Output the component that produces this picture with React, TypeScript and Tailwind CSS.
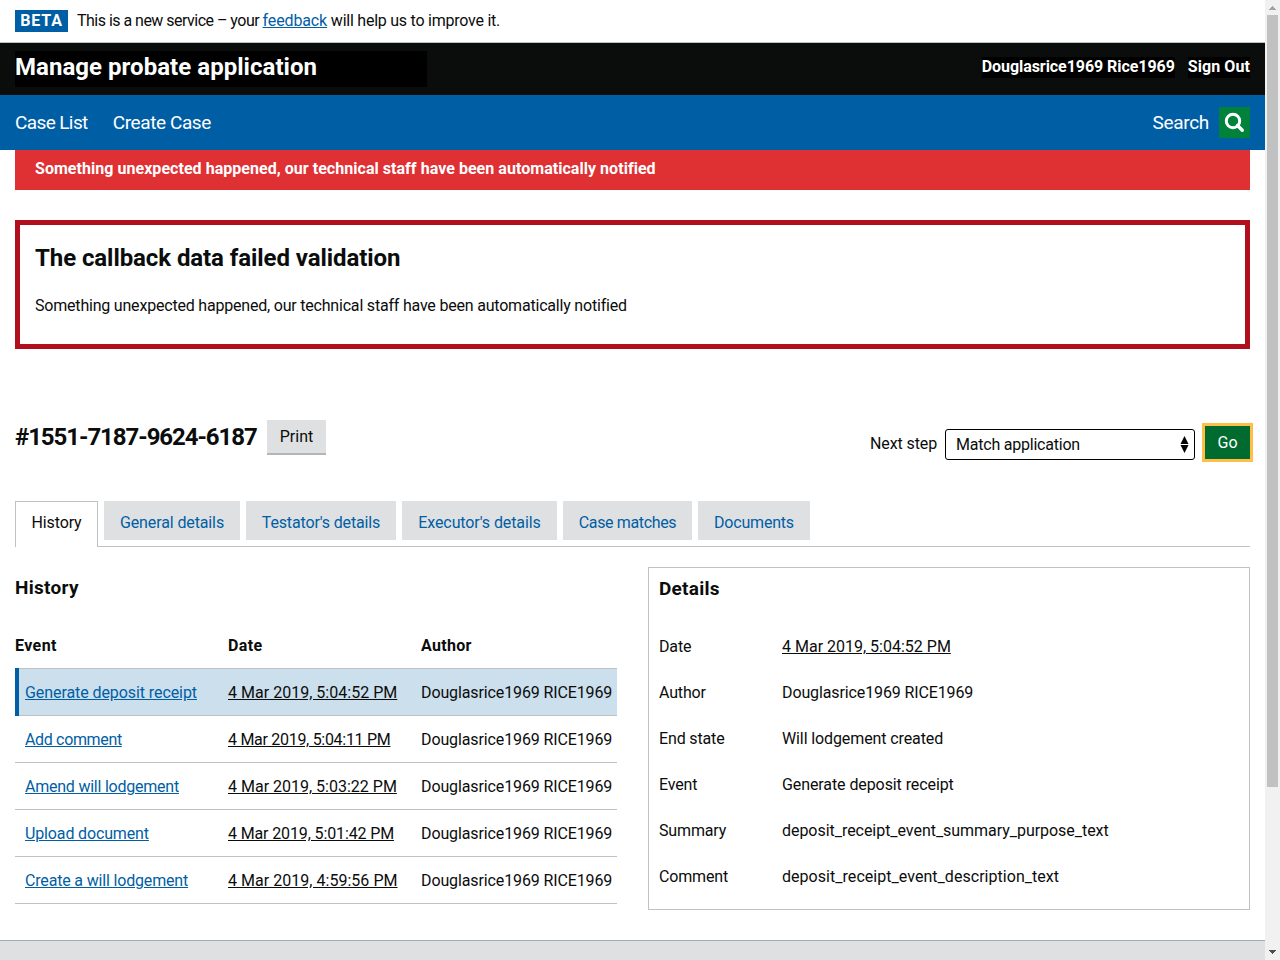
import React from "react";

const tabs = [
  { label: "General details", style: "w-[136px] tracking-[-0.12px]" },
  { label: "Testator's details", style: "w-[150px] tracking-[-0.15px]" },
  { label: "Executor's details", style: "w-[155px] tracking-[-0.1px]" },
  { label: "Case matches", style: "w-[129px] tracking-[-0.36px]" },
  { label: "Documents", style: "w-[112px] tracking-[-0.2px]" },
];

const events = [
  { name: "Generate deposit receipt", date: "4 Mar 2019, 5:04:52 PM", nameStyle: "tracking-[-0.08px]", dateStyle: "tracking-[0.02px]" },
  { name: "Add comment", date: "4 Mar 2019, 5:04:11 PM", nameStyle: "tracking-[-0.34px]", dateStyle: "tracking-[-0.29px]" },
  { name: "Amend will lodgement", date: "4 Mar 2019, 5:03:22 PM", nameStyle: "tracking-[-0.23px]", dateStyle: "tracking-[0px]" },
  { name: "Upload document", date: "4 Mar 2019, 5:01:42 PM", nameStyle: "tracking-[-0.14px]", dateStyle: "tracking-[-0.13px]" },
  { name: "Create a will lodgement", date: "4 Mar 2019, 4:59:56 PM", nameStyle: "tracking-[-0.17px]", dateStyle: "tracking-[0.03px]" },
];

const details = [
  { label: "Date", value: "4 Mar 2019, 5:04:52 PM", style: "underline" },
  { label: "Author", value: "Douglasrice1969 RICE1969", style: "tracking-[-0.12px]" },
  { label: "End state", value: "Will lodgement created", style: "tracking-[-0.11px]" },
  { label: "Event", value: "Generate deposit receipt", style: "tracking-[-0.09px]" },
  { label: "Summary", value: "deposit_receipt_event_summary_purpose_text", style: "tracking-[-0.04px]" },
  { label: "Comment", value: "deposit_receipt_event_description_text", style: "tracking-[0.04px]" },
];

function PhaseBanner() {
  return (
    <div className="flex h-[43px] shrink-0 items-start border-b border-[#bfc1c3] px-[15px] pt-[10px]">
      <strong className="h-[22px] w-[53px] bg-[#005ea5] text-center text-[16px] leading-[22px] font-bold tracking-[0.8px] text-white">BETA</strong>
      <span className="ml-[9px] leading-[22px] tracking-[-0.24px]">
        <span className="tracking-[-0.52px]">This is a new service – your </span>
        <a className="tracking-[-0.12px] text-[#005ea5] underline">feedback</a> will help us to improve it.
      </span>
    </div>
  );
}

function Header() {
  return (
    <header className="flex h-[52px] shrink-0 items-start justify-between bg-[#0b0c0c] px-[15px] pt-2 font-bold text-white">
      <div className="h-9 w-[412px] bg-black text-[24px] leading-[32px] tracking-[0.04px]">
        <span>Manage probate application</span>
      </div>
      <div className="flex gap-[13px] pt-[6px]">
        <span className="h-[21px] bg-black leading-[20px] tracking-[-0.06px]">Douglasrice1969 Rice1969</span>
        <span className="h-[21px] bg-black leading-[20px] tracking-[0.08px]">Sign Out</span>
      </div>
    </header>
  );
}

function Nav() {
  return (
    <nav className="flex h-[55px] shrink-0 items-center justify-between bg-[#005ea5] px-[15px] text-[19px] text-white">
      <div className="flex gap-[25px] pt-px">
        <a className="tracking-[-0.61px]">Case List</a>
        <a className="tracking-[-0.4px]">Create Case</a>
      </div>
      <div className="flex items-center gap-[10px]">
        <a className="pt-[2px] tracking-[-0.3px]">Search</a>
        <span className="flex size-[31px] items-center justify-center bg-[#00823b]">
          <svg width="31" height="31" viewBox="0 0 31 31" fill="none" stroke="#fff">
            <circle cx="14" cy="14" r="6.7" strokeWidth="3" />
            <path d="M18.5 18.5L23.3 23.3" strokeWidth="3.4" strokeLinecap="round" />
          </svg>
        </span>
      </div>
    </nav>
  );
}

function CaseBar() {
  return (
    <div className="mt-[71px] flex h-[42px] items-start">
      <h1 className="w-[252px] text-[24px] leading-[34px] font-bold tracking-[-1.06px] whitespace-nowrap">#1551-7187-9624-6187</h1>
      <button className="h-[35px] w-[59px] border-b-2 border-[#b2b6b9] bg-[#dee0e2] leading-[33px]">Print</button>
      <label className="mr-2 ml-auto pt-[13px] leading-[22px] tracking-[-0.12px]">Next step</label>
      <div className="mt-[9px] flex h-[31px] w-[250px] items-center justify-between rounded-[3px] border border-black bg-white pr-[5px] pl-[10px]">
        <span className="tracking-[-0.22px]">Match application</span>
        <svg width="9" height="17" viewBox="0 0 9 17">
          <path d="M4.5 0L8.5 8H.5ZM4.5 17L8.5 9H.5Z" fill="#000" />
        </svg>
      </div>
      <button className="mt-[3px] -mr-[3px] ml-[7px] h-[39px] w-[51px] border-[3px] border-[#ffbf47] bg-[#006a2f] leading-[33px] text-white">Go</button>
    </div>
  );
}

function Tabs() {
  return (
    <div className="mt-[39px] flex h-[46px] border-b border-[#bfc1c3]">
      <a className="mr-[6px] h-[46px] w-[83px] border border-b-0 border-[#bfc1c3] bg-white text-center leading-[42px] tracking-[-0.1px]">History</a>
      {tabs.map((t) => (
        <a key={t.label} className={"mr-[6px] h-[39px] bg-[#dee0e2] text-center leading-[43px] text-[#005ea5] " + t.style}>
          {t.label}
        </a>
      ))}
    </div>
  );
}

function History() {
  return (
    <section className="w-[602px] shrink-0">
      <h2 className="text-[19px] leading-[42px] font-bold tracking-[0.3px]">History</h2>
      <div className="mt-[14px] flex h-[45px] leading-[45px] font-bold tracking-[0.4px]">
        <span className="w-[213px]">Event</span>
        <span className="w-[193px]">Date</span>
        <span className="tracking-[0.3px]">Author</span>
      </div>
      <div className="border-t border-[#bfc1c3]">
        {events.map((e, i) => (
          <div key={e.name} className={"flex h-[47px] border-b border-[#bfc1c3] leading-[47px] whitespace-nowrap " + (i === 0 ? "bg-[#ccdfed]" : "")}>
            <div className={"-mt-px mb-[-1px] w-[4px] " + (i === 0 ? "bg-[#005ea5]" : "")} />
            <a className={"w-[209px] pl-[6px] text-[#005ea5] underline " + e.nameStyle}>{e.name}</a>
            <span className={"w-[193px] underline " + e.dateStyle}>{e.date}</span>
            <span className="tracking-[-0.12px]">Douglasrice1969 RICE1969</span>
          </div>
        ))}
      </div>
    </section>
  );
}

function Details() {
  return (
    <section className="h-[343px] w-[602px] border border-[#bfc1c3] pl-[10px]">
      <h2 className="text-[19px] leading-[41px] font-bold tracking-[0.25px]">Details</h2>
      <div className="mt-[15px]">
        {details.map((d) => (
          <div key={d.label} className="flex h-[46px] leading-[46px]">
            <span className="w-[123px] tracking-[-0.15px]">{d.label}</span>
            <span className={d.style}>{d.value}</span>
          </div>
        ))}
      </div>
    </section>
  );
}

function Scrollbar() {
  return (
    <div className="flex h-full w-[15px] shrink-0 flex-col items-center bg-[#f1f1f1]">
      <svg className="h-[15px] w-[15px] shrink-0" viewBox="0 0 15 15" shapeRendering="crispEdges">
        <path d="M7.5 6L11 10H4Z" fill="#a3a3a3" />
      </svg>
      <div className="h-[772px] w-[11px] bg-[#c1c1c1]" />
      <svg className="mt-auto h-[15px] w-[15px] shrink-0" viewBox="0 0 15 15" shapeRendering="crispEdges">
        <path d="M4 5H11L7.5 9Z" fill="#505050" />
      </svg>
    </div>
  );
}

export default function App() {
  return (
    <div className="flex h-[960px] w-[1280px] overflow-hidden bg-white font-['Roboto','Liberation_Sans',sans-serif] text-[16px] text-[#0b0c0c]">
      <div className="flex h-full w-[1265px] flex-col">
        <PhaseBanner />
        <Header />
        <Nav />
        <main className="px-[15px]">
          <div className="h-10 bg-[#df3034] pl-5 leading-[38px] font-bold tracking-[0.04px] text-white">
            Something unexpected happened, our technical staff have been automatically notified
          </div>
          <div className="mt-[30px] h-[129px] border-[5px] border-[#b10e1e] px-[15px] pt-[17px]">
            <h2 className="text-[24px] leading-[32px] font-bold tracking-[-0.08px]">The callback data failed validation</h2>
            <p className="mt-[21px] leading-[22px] tracking-[-0.2px]">Something unexpected happened, our technical staff have been automatically notified</p>
          </div>
          <CaseBar />
          <Tabs />
          <div className="mt-5 flex justify-between">
            <History />
            <Details />
          </div>
        </main>
        <footer className="mt-[30px] flex-1 border-t border-[#a1acb2] bg-[#dee0e2]" />
      </div>
      <Scrollbar />
    </div>
  );
}
